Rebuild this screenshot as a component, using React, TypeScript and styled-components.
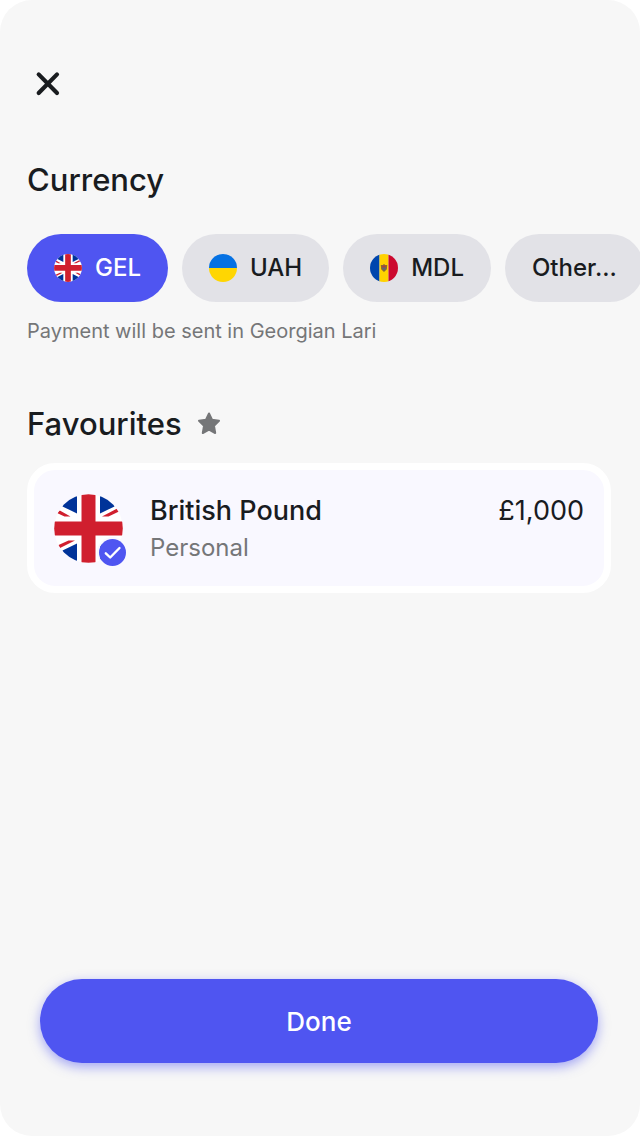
import { useState } from "react";
import styled, { createGlobalStyle } from "styled-components";

const GlobalStyle = createGlobalStyle`
  *, *::before, *::after { box-sizing: border-box; }
  body { margin: 0; background: #fff; font-family: Inter, sans-serif; color: #191c1f; }
  button { font: inherit; color: inherit; border: 0; cursor: pointer; }
  svg { display: block; flex: none; }
`;

const Screen = styled.main`
  display: flex;
  flex-direction: column;
  min-height: 100vh;
  padding: 64px 0 73px;
  overflow: hidden;
  background: #f7f7f7;
  border-radius: 32px;
`;

const CloseButton = styled.button`
  align-self: flex-start;
  margin-left: 28px;
  padding: 0;
  background: none;
`;

const Section = styled.section<{ $top: number }>`
  margin-top: ${(p) => p.$top}px;
`;

const Heading = styled.h2`
  display: flex;
  align-items: center;
  gap: 14px;
  margin: 0;
  padding: 0 27px;
  font-size: 31px;
  line-height: 40px;
  font-weight: 500;
`;

const Chips = styled.div`
  display: flex;
  gap: 14px;
  margin-top: 34px;
  padding-left: 27px;
  overflow: hidden;
`;

const Chip = styled.button<{ $active?: boolean }>`
  display: flex;
  flex: none;
  align-items: center;
  gap: 13px;
  height: 68px;
  padding: 0 27px;
  border-radius: 34px;
  font-size: 24px;
  line-height: 32px;
  font-weight: 500;
  background: ${(p) => (p.$active ? "#4f55f1" : "#e2e2e7")};
  color: ${(p) => (p.$active ? "#fff" : "#191c1f")};
`;

const Hint = styled.p`
  margin: 15px 0 0;
  padding: 0 27px;
  font-size: 20px;
  line-height: 28px;
  color: #757678;
`;

const AccountCard = styled.button`
  display: flex;
  align-items: flex-start;
  width: calc(100% - 56px);
  height: 130px;
  margin: 19px 29px 0 27px;
  padding: 24px 20px 0;
  text-align: left;
  background: #f9f8ff;
  && { border: 7px solid #fff; }
  border-radius: 28px;
`;

const Avatar = styled.span`
  position: relative;
  flex: none;
  margin-right: 27px;
`;

const Badge = styled.span`
  position: absolute;
  right: -3px;
  bottom: -3px;
  border-radius: 50%;
  box-shadow: 0 0 0 2px #f9f8ff;
`;

const Details = styled.span`
  display: flex;
  flex: 1;
  flex-direction: column;
`;

const AccountName = styled.span`
  font-size: 27px;
  line-height: 34px;
  font-weight: 500;
`;

const AccountType = styled.span`
  margin-top: 3px;
  font-size: 24px;
  line-height: 34px;
  color: #757678;
`;

const Amount = styled.span`
  font-size: 27px;
  line-height: 34px;
`;

const Footer = styled.footer`
  margin-top: auto;
  padding: 0 42px 0 40px;
`;

const DoneButton = styled.button`
  width: 100%;
  height: 84px;
  padding: 2px 0 0;
  border-radius: 42px;
  background: #4f55f1;
  font-size: 26px;
  line-height: 32px;
  font-weight: 500;
  box-shadow: 0 4px 12px rgba(79, 85, 241, 0.5);
  && { color: #fff; }
`;

function UnitedKingdomFlag({ size, id }: { size: number; id: string }) {
  return (
    <svg width={size} height={size} viewBox="0 0 69 69" aria-hidden="true">
      <clipPath id={id}>
        <circle cx="34.5" cy="34.5" r="34.3" />
      </clipPath>
      <g clipPath={`url(#${id})`}>
        <path fill="#fff" d="M0 0h69v69H0z" />
        <path
          fill="#003399"
          d="M23 0v19.600L8.500 12.400V0zM46 0v19.600L60.500 12.400V0zM23 69V49.400L8.500 56.600V69zM46 69V49.400L60.500 56.600V69z"
        />
        <path
          fill="#d01f2e"
          d="M5.800 16.400 16.500 22.500H10.500L3 19zM48 22.600 63.200 14.500 65 17.600 54.500 22.600zM21 46.400 6 54 4 51.200 14.500 46.400zM63 52.600 52.500 46.500H58.500L66 50z"
        />
        <path fill="#d01f2e" d="M27.500 0h14v27.400H69v14H41.500V69h-14V41.400H0v-14h27.500z" />
      </g>
    </svg>
  );
}

function UkraineFlag() {
  return (
    <svg width="28" height="28" viewBox="0 0 28 28" aria-hidden="true">
      <path fill="#0571e3" d="M0 14a14 14 0 0 1 28 0z" />
      <path fill="#ffd602" d="M0 14a14 14 0 0 0 28 0z" />
    </svg>
  );
}

function MoldovaFlag() {
  return (
    <svg width="28" height="28" viewBox="0 0 28 28" aria-hidden="true">
      <clipPath id="moldova">
        <circle cx="14" cy="14" r="14" />
      </clipPath>
      <g clipPath="url(#moldova)">
        <path fill="#0046ae" d="M0 0h9.500v28H0z" />
        <path fill="#ffd200" d="M9.500 0h9v28h-9z" />
        <path fill="#cc092f" d="M18.500 0H28v28h-9.500z" />
        <path fill="#8b6a35" d="M14 9.800l1 1.200 2.200.1-.3 4.200L14 18l-2.900-2.700-.3-4.200L13 11z" />
        <path fill="#b33b3a" d="M12.500 11.800h3v1.700h-3z" />
        <path fill="#5c657b" d="M12.500 13.500h3v1.500L14 16.200 12.500 15z" />
      </g>
    </svg>
  );
}

const currencies = [
  { code: "GEL", flag: <UnitedKingdomFlag size={28} id="uk-small" /> },
  { code: "UAH", flag: <UkraineFlag /> },
  { code: "MDL", flag: <MoldovaFlag /> },
  { code: "Other...", flag: null },
];

export default function App() {
  const [selected, setSelected] = useState("GEL");
  return (
    <>
      <GlobalStyle />
      <Screen>
        <CloseButton type="button" aria-label="Close">
          <svg width="40" height="40" viewBox="0 0 40 40" fill="none" stroke="#191c1f" strokeWidth="4.200" strokeLinecap="round">
            <path d="M10.700 10.400 29 29M29 10.400 10.700 29" />
          </svg>
        </CloseButton>

        <Section $top={56}>
          <Heading>Currency</Heading>
          <Chips>
            {currencies.map(({ code, flag }) => (
              <Chip
                key={code}
                type="button"
                $active={selected === code}
                aria-pressed={selected === code}
                onClick={() => setSelected(code)}
              >
                {flag}
                {code}
              </Chip>
            ))}
          </Chips>
          <Hint>Payment will be sent in Georgian Lari</Hint>
        </Section>

        <Section $top={59}>
          <Heading>
            Favourites
            <svg width="26" height="26" viewBox="0 0 26 26" aria-hidden="true">
              <path
                fill="#757678"
                stroke="#757678"
                strokeWidth="2"
                strokeLinejoin="round"
                d="M13 2.500 16 8.800 23 9.800 18 14.800 19.200 22 13 18.700 6.800 22 8 14.800 3 9.800 10 8.800z"
              />
            </svg>
          </Heading>
          <AccountCard type="button">
            <Avatar>
              <UnitedKingdomFlag size={69} id="uk-large" />
              <Badge>
                <svg width="27" height="27" viewBox="0 0 27 27" fill="none" aria-hidden="true">
                  <circle cx="13.500" cy="13.500" r="13.500" fill="#4f55f1" />
                  <path d="M6.800 14.300 11.200 18.500 20.500 9" stroke="#fff" strokeWidth="2.400" strokeLinecap="round" strokeLinejoin="round" />
                </svg>
              </Badge>
            </Avatar>
            <Details>
              <AccountName>British Pound</AccountName>
              <AccountType>Personal</AccountType>
            </Details>
            <Amount>£1,000</Amount>
          </AccountCard>
        </Section>

        <Footer>
          <DoneButton type="button">Done</DoneButton>
        </Footer>
      </Screen>
    </>
  );
}
